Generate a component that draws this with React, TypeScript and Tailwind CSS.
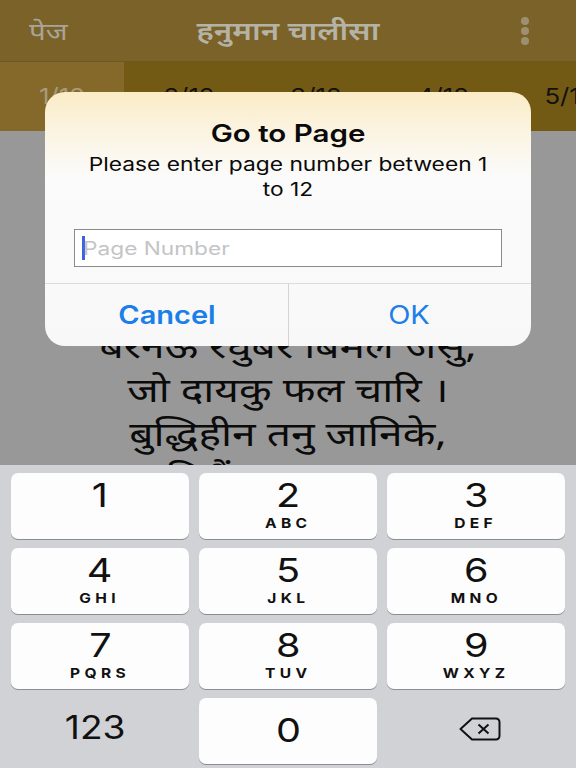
const font = { fontFamily: '"Noto Sans", Inter, "DejaVu Sans", sans-serif' };

const keys: [string, string][][] = [
  [["1", ""], ["2", "ABC"], ["3", "DEF"]],
  [["4", "GHI"], ["5", "JKL"], ["6", "MNO"]],
  [["7", "PQRS"], ["8", "TUV"], ["9", "WXYZ"]],
];

function Key({ n, l }: { n: string; l: string }) {
  return (
    <div className="flex h-[66px] flex-col items-center rounded-[7px] bg-[#fdfdfd] font-['Inter'] text-[#111] shadow-[0_1px_0_#8b8d91]">
      <div className={l || n === "1" ? "mt-[2px] h-[40px] scale-x-[1.2] text-[33px] leading-[40px] font-normal" : "mt-[12px] h-[40px] scale-x-[1.2] text-[33px] leading-[40px] font-normal"}>{n}</div>
      <div className="scale-x-[1.15] text-[13.5px] leading-[16px] font-bold tracking-[3.8px]">{l}</div>
    </div>
  );
}

function Tab({ t }: { t: string }) {
  return <div className="w-[124px] shrink-0 scale-x-[1.17] text-center">{t}</div>;
}

export default function App() {
  return (
    <div className="relative flex h-[768px] w-[576px] flex-col overflow-hidden bg-[#989898]" style={font}>
      <div className="flex h-[62px] shrink-0 items-center border-b border-[#6d5722] bg-[#7b6229]">
        <div className="w-[120px] pl-[29px]">
          <span className="block origin-left scale-x-[1.23] text-[24px] text-[#a8a598]">पेज</span>
        </div>
        <div className="flex-1 scale-x-[1.25] text-center text-[25px] font-semibold text-[#b5b2a6]">हनुमान चालीसा</div>
        <div className="flex w-[120px] justify-end pr-[46px]">
          <svg width="10" height="28" viewBox="0 0 10 28"><g fill="#9c9070"><circle cx="5" cy="4" r="4" /><circle cx="5" cy="14" r="4" /><circle cx="5" cy="24" r="4" /></g></svg>
        </div>
      </div>
      <div className="flex h-[69px] shrink-0 gap-[3px] overflow-hidden bg-[#735a14] font-['Inter'] text-[22px] leading-[69px] text-[#111]">
        <div className="w-[124px] shrink-0 bg-[#85692b] text-[#a59b7e]">
          <div className="scale-x-[1.17] text-center">1/12</div>
        </div>
        <Tab t="2/12" />
        <Tab t="3/12" />
        <Tab t="4/12" />
        <Tab t="5/12" />
      </div>
      <div className="h-[334px] shrink-0 overflow-hidden pt-[16px] text-center text-[34px] leading-[44px] whitespace-nowrap text-[#0b0b0b]">
        <div className="scale-x-[1.25]">
          <div>श्री हनुमान चालीसा</div>
          <div>दोहा</div>
          <div>श्रीगुरु चरन सरोज रज,</div>
          <div>निज मनु मुकुरु सुधारि ।</div>
          <div>बरनऊँ रघुबर बिमल जसु,</div>
          <div>जो दायकु फल चारि ।</div>
          <div>बुद्धिहीन तनु जानिके,</div>
          <div>सुमिरौं पवन कुमार ।</div>
        </div>
      </div>
      <div className="flex flex-1 flex-col gap-[9px] bg-[#d0d2d6] px-[11px] pt-[8px]">
        {keys.map((row, i) => (
          <div key={i} className="grid grid-cols-3 gap-[10px]">
            {row.map(([n, l]) => (
              <Key key={n} n={n} l={l} />
            ))}
          </div>
        ))}
        <div className="grid grid-cols-3 gap-[10px]">
          <div className="flex h-[66px] items-center justify-center pr-[10px] pb-[6px] font-['Inter'] text-[#111]">
            <span className="scale-x-[1.16] text-[32px] font-normal">123</span>
          </div>
          <Key n="0" l="" />
          <div className="flex h-[66px] items-center justify-center pb-[4px] pl-[8px]">
            <svg width="42" height="24" viewBox="0 0 42 24" fill="none" stroke="#111" strokeWidth="2">
              <path d="M13 1.5H37A3.5 3.5 0 0 1 40.5 5V19A3.5 3.5 0 0 1 37 22.5H13L1.5 12Z" strokeLinejoin="round" />
              <path d="M19.5 7.5L29.5 16.5M29.5 7.5L19.5 16.5" />
            </svg>
          </div>
        </div>
      </div>

      <div className="absolute top-[92px] left-[45px] flex h-[254px] w-[486px] flex-col rounded-[20px] bg-[linear-gradient(to_bottom,#fbecc6_0px,#fbf3df_35px,#fbfbfb_85px,#f8f8f8_100%)] font-['Inter'] text-[#0a0a0a]">
        <div className="mt-[26px] scale-x-[1.23] text-center text-[24px] leading-[32px] font-semibold">Go to Page</div>
        <div className="mx-auto mt-[2px] w-[336px] scale-x-[1.23] text-center text-[18.5px] leading-[25px]">Please enter page number between 1 to 12</div>
        <div className="mx-[29px] mt-[27px] flex h-[38px] items-center border border-[#8b8b8b] bg-white pl-[7px]">
          <div className="h-[24px] w-[3px] bg-[#3f62e0]" />
          <span className="-ml-[2px] origin-left scale-x-[1.26] text-[18px] text-[#c4c4c6]">Page Number</span>
        </div>
        <div className="mt-[16px] flex flex-1 border-t border-[#dcdcdc] pt-[2px] text-[25px] text-[#1a7fe8]">
          <div className="-mt-[2px] flex w-[244px] items-center justify-center border-r border-[#d4d4d4] pt-[2px] font-semibold">
            <span className="scale-x-[1.16]">Cancel</span>
          </div>
          <div className="flex flex-1 items-center justify-center pr-[2px]">
            <span className="scale-x-[1.16]">OK</span>
          </div>
        </div>
      </div>
    </div>
  );
}
